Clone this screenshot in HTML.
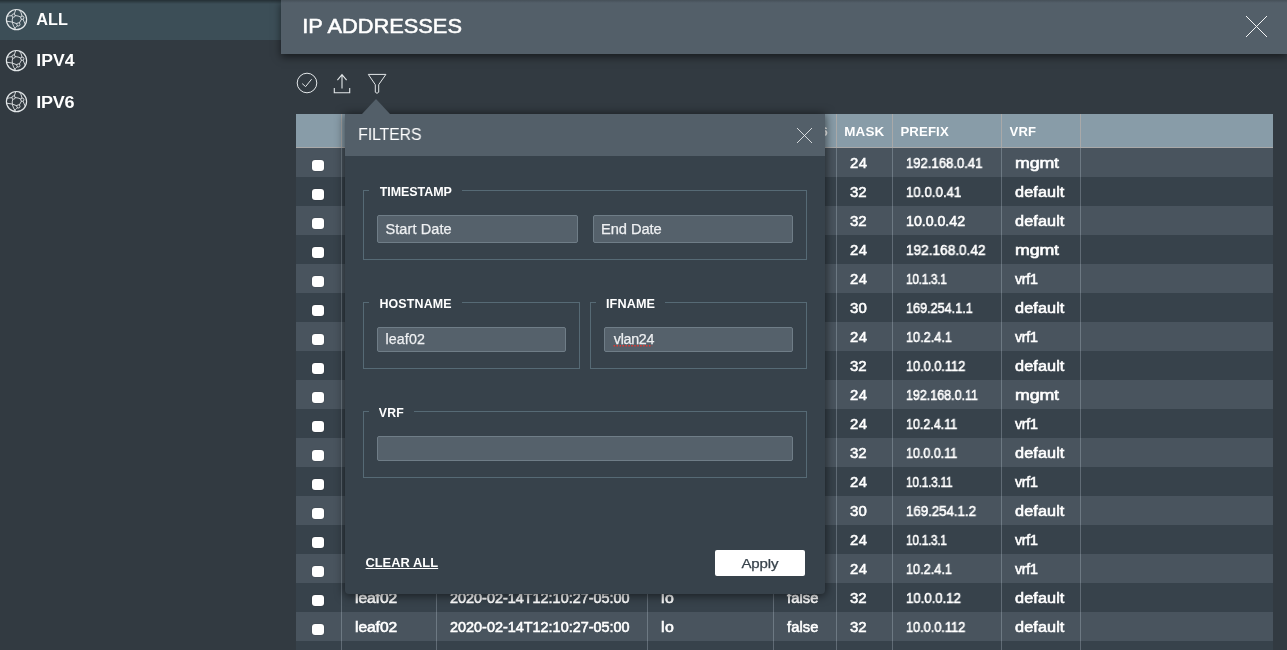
<!DOCTYPE html>
<html lang="en">
<head>
<meta charset="utf-8">
<title>IP Addresses</title>
<style>
*{box-sizing:border-box;margin:0;padding:0}
html,body{width:1287px;height:650px;overflow:hidden}
body{background:#323a41;font-family:"Liberation Sans",sans-serif;color:#fff;position:relative}
.abs{position:absolute}
i{font-style:normal}
.t{position:absolute;white-space:nowrap;display:block;transform-origin:0 0;will-change:transform}
.c u{text-decoration:none;display:inline-block;transform:scaleX(.7);margin:0 -1.05px}
.c i{display:inline-block;transform-origin:0 50%;will-change:transform}
/* sidebar */
.sel{position:absolute;left:0;top:0;width:281px;height:40px;background:#3c4e57}
.nav{font-size:16px;font-weight:700;line-height:20px}
.globe{position:absolute;left:5px;width:23px;height:23px}
/* header */
.hdr{position:absolute;left:281px;top:0;width:1006px;height:54px;background:#535f69;box-shadow:0 3px 8px 0 rgba(0,0,0,.55)}
.title{font-size:21px;font-weight:400;line-height:28px;-webkit-text-stroke:.55px #fff}
.topshade{position:absolute;left:0;top:0;width:281px;height:4px;background:linear-gradient(rgba(0,0,0,.4),rgba(0,0,0,0))}
.topshade2{position:absolute;left:281px;top:0;width:1006px;height:3px;background:linear-gradient(rgba(0,0,0,.16),rgba(0,0,0,0))}
/* table */
.th{position:absolute;left:296px;top:114px;width:977px;height:34px;background:#889ca8;border-bottom:1px solid #a9a9a9}
.th b{position:absolute;top:0;height:33px;border-left:1px solid #a9a9a9}
.th .t{top:9px;line-height:16px;font-size:13px;font-weight:700}
.r{position:absolute;left:296px;width:977px;height:29px}
.o{background:#49545e}.e{background:#37424b}
.c{position:absolute;top:0;height:29px;line-height:28px;padding-top:1px;font-size:14px;font-weight:400;-webkit-text-stroke:.55px #fff;white-space:nowrap;border-left:1px solid rgba(220,232,242,.25);padding-left:13px;overflow:hidden}
.c1{left:45px;width:95px}.c2{left:140px;width:211px}.c3{left:351px;width:126px}.c4{left:477px;width:63px}
.c5{left:540px;width:56px}.c6{left:596px;width:109px;padding-left:13.4px}.c7{left:705px;width:79px}
.r:after{content:"";position:absolute;left:784px;top:0;bottom:0;border-left:1px solid rgba(220,232,242,.25)}
.cb{position:absolute;left:16.3px;top:11.6px;width:11.4px;height:11.4px;background:#fff;border-radius:3px;box-shadow:0 0 1px rgba(0,0,0,.5)}
/* filter */
.fp{position:absolute;left:345px;top:114px;width:480px;height:479.5px;background:#37424b;border-radius:0 0 4px 4px;box-shadow:0 1px 10px 1px rgba(0,0,0,.55)}
.fph{position:absolute;left:0;top:0;width:480px;height:42px;background:#535f69}
.ftitle{font-size:16px;font-weight:400;line-height:24px}
.arrow{position:absolute;left:17px;top:-15px;width:0;height:0;border-left:14px solid transparent;border-right:14px solid transparent;border-bottom:15px solid #535f69}
.fs{position:absolute;border:1px solid #566a75}
.lg{position:absolute;top:-9px;left:5px;height:17px;background:#37424b}
.lg .t{left:10px;top:0;font-size:12px;font-weight:700;line-height:16px}
.in{position:absolute;background:#55616b;border:1px solid #6f7d87;border-radius:2px}
.in .t{left:8px;top:5px;font-size:14px;line-height:16px;color:#eef0f2;-webkit-text-stroke:.25px #eef0f2}
.clear{font-size:12.5px;font-weight:700;text-decoration:underline;line-height:16px}
.apply{position:absolute;left:370px;top:436px;width:90px;height:26px;background:#fff;border-radius:2px}
.apply .t{left:26px;top:5px;color:#37424b;font-size:13.5px;line-height:16px;-webkit-text-stroke:.25px #37424b}
</style>
</head>
<body>
<div class="sel"></div>
<svg class="globe" style="top:8px" viewBox="0 0 23 23" fill="none" stroke="#e3e7e9" stroke-width=".9">
<circle cx="11.5" cy="11.6" r="10.1" stroke-width="1.2"/>
<path d="M10.9 1.7 Q9.9 3.8 9.2 6.2 M1.8 8.4 Q4.5 7.7 7.2 7.7 M7.9 9 Q5.6 14.5 10.6 21.4 M9.9 7.5 Q13.2 7.7 16.1 9.2 M14.2 1.8 Q16.6 4.6 17.1 8.3 M18 11.1 Q19.2 14 20.2 16.2 M16.6 11 L14.2 15.2 M12.1 15.9 Q7.6 13.6 1.8 13.2 M12.6 17.6 Q11.4 19 9.6 20.6"/>
<circle cx="8.55" cy="7.55" r="1.6"/><circle cx="17.3" cy="9.7" r="1.6"/><circle cx="13.4" cy="16.4" r="1.6"/>
</svg>
<svg class="globe" style="top:48.5px" viewBox="0 0 23 23" fill="none" stroke="#e3e7e9" stroke-width=".9">
<circle cx="11.5" cy="11.6" r="10.1" stroke-width="1.2"/>
<path d="M10.9 1.7 Q9.9 3.8 9.2 6.2 M1.8 8.4 Q4.5 7.7 7.2 7.7 M7.9 9 Q5.6 14.5 10.6 21.4 M9.9 7.5 Q13.2 7.7 16.1 9.2 M14.2 1.8 Q16.6 4.6 17.1 8.3 M18 11.1 Q19.2 14 20.2 16.2 M16.6 11 L14.2 15.2 M12.1 15.9 Q7.6 13.6 1.8 13.2 M12.6 17.6 Q11.4 19 9.6 20.6"/>
<circle cx="8.55" cy="7.55" r="1.6"/><circle cx="17.3" cy="9.7" r="1.6"/><circle cx="13.4" cy="16.4" r="1.6"/>
</svg>
<svg class="globe" style="top:89.7px" viewBox="0 0 23 23" fill="none" stroke="#e3e7e9" stroke-width=".9">
<circle cx="11.5" cy="11.6" r="10.1" stroke-width="1.2"/>
<path d="M10.9 1.7 Q9.9 3.8 9.2 6.2 M1.8 8.4 Q4.5 7.7 7.2 7.7 M7.9 9 Q5.6 14.5 10.6 21.4 M9.9 7.5 Q13.2 7.7 16.1 9.2 M14.2 1.8 Q16.6 4.6 17.1 8.3 M18 11.1 Q19.2 14 20.2 16.2 M16.6 11 L14.2 15.2 M12.1 15.9 Q7.6 13.6 1.8 13.2 M12.6 17.6 Q11.4 19 9.6 20.6"/>
<circle cx="8.55" cy="7.55" r="1.6"/><circle cx="17.3" cy="9.7" r="1.6"/><circle cx="13.4" cy="16.4" r="1.6"/>
</svg>
<span class="t nav" id="t_all" style="left:37px;top:9px;letter-spacing:0.09px;transform:translate(-0.80px,1.00px) scaleX(1.013)">ALL</span>
<span class="t nav" id="t_ipv4" style="left:37px;top:50px;letter-spacing:0.05px;transform:translate(-0.80px,1.00px) scaleX(1.100)">IPV4</span>
<span class="t nav" id="t_ipv6" style="left:37px;top:91px;letter-spacing:-0.19px;transform:translate(-0.80px,2.00px) scaleX(1.124)">IPV6</span>

<!-- toolbar icons -->
<svg class="abs" style="left:295px;top:71px" width="24" height="24" viewBox="0 0 24 24" fill="none" stroke="#e3e7e9" stroke-width="1"><circle cx="12" cy="12" r="9.8"/><path d="M7.2 12.6 L10.6 15.6 L16.6 8.2"/></svg>
<svg class="abs" style="left:330px;top:71px" width="24" height="24" viewBox="0 0 24 24" fill="none" stroke="#e3e7e9" stroke-width="1.1"><path d="M12 3.6 V17.4 M7.4 9.1 L12 3.6 L16.6 9.1 M4.3 17 V21.7 H19.7 V17"/></svg>
<svg class="abs" style="left:365px;top:71px" width="24" height="24" viewBox="0 0 24 24" fill="none" stroke="#e3e7e9" stroke-width="1" stroke-linejoin="round"><path d="M3.3 3.4 H20.9 L13.7 13.7 V21.2 Q12 23.4 10.3 21.2 V13.7 Z"/></svg>

<!-- table -->
<div class="th">
<b style="left:45px"></b><b style="left:140px"></b><b style="left:351px"></b><b style="left:477px"></b><b style="left:540px"></b><b style="left:596px"></b><b style="left:705px"></b><b style="left:784px"></b>
<span class="t" style="left:54px">HOSTNAME</span><span class="t" style="left:149px">TIMESTAMP</span><span class="t" style="left:360px">IFNAME</span><span class="t" id="h_isip" style="left:486px;letter-spacing:1.03px;transform:translate(0.00px,1.00px) scaleX(1.000)">ISIPV6</span>
<span class="t" id="h_mask" style="left:549px;letter-spacing:0.17px;transform:translate(-0.80px,1.00px) scaleX(1.032)">MASK</span>
<span class="t" id="h_prefix" style="left:605px;letter-spacing:0.14px;transform:translate(-0.60px,1.00px) scaleX(1.013)">PREFIX</span>
<span class="t" id="h_vrf" style="left:714px;letter-spacing:0.13px;transform:translate(-0.40px,1.00px) scaleX(1.004)">VRF</span>
</div>
<div class="r o" style="top:148px"><span class="cb"></span><span class="c c1"><i style="letter-spacing:0.00px;transform:scaleX(1.000)">leaf01</i></span><span class="c c2"><i style="letter-spacing:-0.00px;transform:scaleX(1.030)">2020-02-14T12:10:27-05:00</i></span><span class="c c3"><i style="letter-spacing:0.00px;transform:scaleX(1.000)">eth0</i></span><span class="c c4"><i style="letter-spacing:0.11px;transform:scaleX(1.050)">false</i></span><span class="c c5"><i style="letter-spacing:0.60px;transform:scaleX(1.056)">24</i></span><span class="c c6"><i style="letter-spacing:0.02px;transform:scaleX(0.932)">192.168.0.41</i></span><span class="c c7"><i style="letter-spacing:-0.12px;transform:scaleX(1.271)">mgmt</i></span></div>
<div class="r e" style="top:177px"><span class="cb"></span><span class="c c1"><i style="letter-spacing:0.00px;transform:scaleX(1.000)">leaf01</i></span><span class="c c2"><i style="letter-spacing:-0.00px;transform:scaleX(1.030)">2020-02-14T12:10:27-05:00</i></span><span class="c c3"><i style="letter-spacing:0.40px;transform:scaleX(1.136)">lo</i></span><span class="c c4"><i style="letter-spacing:0.11px;transform:scaleX(1.050)">false</i></span><span class="c c5"><i style="letter-spacing:0.00px;transform:scaleX(1.067)">32</i></span><span class="c c6"><i style="letter-spacing:0.00px;transform:scaleX(0.948)">10.0.0.41</i></span><span class="c c7"><i style="letter-spacing:0.09px;transform:scaleX(1.160)">default</i></span></div>
<div class="r o" style="top:206px"><span class="cb"></span><span class="c c1"><i style="letter-spacing:0.00px;transform:scaleX(1.000)">leaf01</i></span><span class="c c2"><i style="letter-spacing:-0.00px;transform:scaleX(1.030)">2020-02-14T12:10:27-05:00</i></span><span class="c c3"><i style="letter-spacing:0.40px;transform:scaleX(1.136)">lo</i></span><span class="c c4"><i style="letter-spacing:0.11px;transform:scaleX(1.050)">false</i></span><span class="c c5"><i style="letter-spacing:0.00px;transform:scaleX(1.067)">32</i></span><span class="c c6"><i style="letter-spacing:-0.03px;transform:scaleX(1.016)">10.0.0.42</i></span><span class="c c7"><i style="letter-spacing:0.09px;transform:scaleX(1.160)">default</i></span></div>
<div class="r e" style="top:235px"><span class="cb"></span><span class="c c1"><i style="letter-spacing:-0.08px;transform:scaleX(1.118)">leaf02</i></span><span class="c c2"><i style="letter-spacing:-0.00px;transform:scaleX(1.030)">2020-02-14T12:10:27-05:00</i></span><span class="c c3"><i style="letter-spacing:0.00px;transform:scaleX(1.000)">eth0</i></span><span class="c c4"><i style="letter-spacing:0.11px;transform:scaleX(1.050)">false</i></span><span class="c c5"><i style="letter-spacing:0.60px;transform:scaleX(1.056)">24</i></span><span class="c c6"><i style="letter-spacing:0.01px;transform:scaleX(0.972)">192.168.0.42</i></span><span class="c c7"><i style="letter-spacing:-0.12px;transform:scaleX(1.271)">mgmt</i></span></div>
<div class="r o" style="top:264px"><span class="cb"></span><span class="c c1"><i style="letter-spacing:-0.08px;transform:scaleX(1.118)">leaf02</i></span><span class="c c2"><i style="letter-spacing:-0.00px;transform:scaleX(1.030)">2020-02-14T12:10:27-05:00</i></span><span class="c c3"><i style="letter-spacing:0.00px;transform:scaleX(1.000)">vlan13</i></span><span class="c c4"><i style="letter-spacing:0.11px;transform:scaleX(1.050)">false</i></span><span class="c c5"><i style="letter-spacing:0.60px;transform:scaleX(1.056)">24</i></span><span class="c c6"><i style="letter-spacing:-0.36px;transform:scaleX(0.850)">10.1.3.1</i></span><span class="c c7"><i style="letter-spacing:-0.24px;transform:scaleX(1.017)">vrf1</i></span></div>
<div class="r e" style="top:293px"><span class="cb"></span><span class="c c1"><i style="letter-spacing:-0.08px;transform:scaleX(1.118)">leaf02</i></span><span class="c c2"><i style="letter-spacing:-0.00px;transform:scaleX(1.030)">2020-02-14T12:10:27-05:00</i></span><span class="c c3"><i style="letter-spacing:0.00px;transform:scaleX(1.000)">peerlink.4094</i></span><span class="c c4"><i style="letter-spacing:0.11px;transform:scaleX(1.050)">false</i></span><span class="c c5"><i style="letter-spacing:0.25px;transform:scaleX(1.069)">30</i></span><span class="c c6"><i style="letter-spacing:-0.04px;transform:scaleX(0.908)">169.254.1.1</i></span><span class="c c7"><i style="letter-spacing:0.09px;transform:scaleX(1.160)">default</i></span></div>
<div class="r o" style="top:322px"><span class="cb"></span><span class="c c1"><i style="letter-spacing:-0.08px;transform:scaleX(1.118)">leaf02</i></span><span class="c c2"><i style="letter-spacing:-0.00px;transform:scaleX(1.030)">2020-02-14T12:10:27-05:00</i></span><span class="c c3"><i style="letter-spacing:0.00px;transform:scaleX(1.000)">vlan24</i></span><span class="c c4"><i style="letter-spacing:0.11px;transform:scaleX(1.050)">false</i></span><span class="c c5"><i style="letter-spacing:0.60px;transform:scaleX(1.056)">24</i></span><span class="c c6"><i style="letter-spacing:0.04px;transform:scaleX(0.904)">10.2.4.1</i></span><span class="c c7"><i style="letter-spacing:-0.24px;transform:scaleX(1.017)">vrf1</i></span></div>
<div class="r e" style="top:351px"><span class="cb"></span><span class="c c1"><i style="letter-spacing:-0.08px;transform:scaleX(1.118)">leaf02</i></span><span class="c c2"><i style="letter-spacing:-0.00px;transform:scaleX(1.030)">2020-02-14T12:10:27-05:00</i></span><span class="c c3"><i style="letter-spacing:0.40px;transform:scaleX(1.136)">lo</i></span><span class="c c4"><i style="letter-spacing:0.11px;transform:scaleX(1.050)">false</i></span><span class="c c5"><i style="letter-spacing:0.00px;transform:scaleX(1.067)">32</i></span><span class="c c6"><i style="letter-spacing:-0.05px;transform:scaleX(0.915)">10.0.0.112</i></span><span class="c c7"><i style="letter-spacing:0.09px;transform:scaleX(1.160)">default</i></span></div>
<div class="r o" style="top:380px"><span class="cb"></span><span class="c c1"><i style="letter-spacing:0.00px;transform:scaleX(1.000)">leaf01</i></span><span class="c c2"><i style="letter-spacing:-0.00px;transform:scaleX(1.030)">2020-02-14T12:10:27-05:00</i></span><span class="c c3"><i style="letter-spacing:0.00px;transform:scaleX(1.000)">eth0</i></span><span class="c c4"><i style="letter-spacing:0.11px;transform:scaleX(1.050)">false</i></span><span class="c c5"><i style="letter-spacing:0.60px;transform:scaleX(1.056)">24</i></span><span class="c c6"><i style="letter-spacing:-0.01px;transform:scaleX(0.893)">192.168.0.11</i></span><span class="c c7"><i style="letter-spacing:-0.12px;transform:scaleX(1.271)">mgmt</i></span></div>
<div class="r e" style="top:409px"><span class="cb"></span><span class="c c1"><i style="letter-spacing:0.00px;transform:scaleX(1.000)">leaf01</i></span><span class="c c2"><i style="letter-spacing:-0.00px;transform:scaleX(1.030)">2020-02-14T12:10:27-05:00</i></span><span class="c c3"><i style="letter-spacing:0.00px;transform:scaleX(1.000)">vlan24</i></span><span class="c c4"><i style="letter-spacing:0.11px;transform:scaleX(1.050)">false</i></span><span class="c c5"><i style="letter-spacing:0.60px;transform:scaleX(1.056)">24</i></span><span class="c c6"><i style="letter-spacing:-0.05px;transform:scaleX(0.898)">10.2.4.11</i></span><span class="c c7"><i style="letter-spacing:-0.24px;transform:scaleX(1.017)">vrf1</i></span></div>
<div class="r o" style="top:438px"><span class="cb"></span><span class="c c1"><i style="letter-spacing:0.00px;transform:scaleX(1.000)">leaf01</i></span><span class="c c2"><i style="letter-spacing:-0.00px;transform:scaleX(1.030)">2020-02-14T12:10:27-05:00</i></span><span class="c c3"><i style="letter-spacing:0.40px;transform:scaleX(1.136)">lo</i></span><span class="c c4"><i style="letter-spacing:0.11px;transform:scaleX(1.050)">false</i></span><span class="c c5"><i style="letter-spacing:0.00px;transform:scaleX(1.067)">32</i></span><span class="c c6"><i style="letter-spacing:-0.05px;transform:scaleX(0.898)">10.0.0.11</i></span><span class="c c7"><i style="letter-spacing:0.09px;transform:scaleX(1.160)">default</i></span></div>
<div class="r e" style="top:467px"><span class="cb"></span><span class="c c1"><i style="letter-spacing:0.00px;transform:scaleX(1.000)">leaf01</i></span><span class="c c2"><i style="letter-spacing:-0.00px;transform:scaleX(1.030)">2020-02-14T12:10:27-05:00</i></span><span class="c c3"><i style="letter-spacing:0.00px;transform:scaleX(1.000)">vlan13</i></span><span class="c c4"><i style="letter-spacing:0.11px;transform:scaleX(1.050)">false</i></span><span class="c c5"><i style="letter-spacing:0.60px;transform:scaleX(1.056)">24</i></span><span class="c c6"><i style="letter-spacing:-0.33px;transform:scaleX(0.850)">10.1.3.11</i></span><span class="c c7"><i style="letter-spacing:-0.24px;transform:scaleX(1.017)">vrf1</i></span></div>
<div class="r o" style="top:496px"><span class="cb"></span><span class="c c1"><i style="letter-spacing:0.00px;transform:scaleX(1.000)">leaf01</i></span><span class="c c2"><i style="letter-spacing:-0.00px;transform:scaleX(1.030)">2020-02-14T12:10:27-05:00</i></span><span class="c c3"><i style="letter-spacing:0.00px;transform:scaleX(1.000)">peerlink.4094</i></span><span class="c c4"><i style="letter-spacing:0.11px;transform:scaleX(1.050)">false</i></span><span class="c c5"><i style="letter-spacing:0.25px;transform:scaleX(1.069)">30</i></span><span class="c c6"><i style="letter-spacing:-0.05px;transform:scaleX(0.953)">169.254.1.2</i></span><span class="c c7"><i style="letter-spacing:0.09px;transform:scaleX(1.160)">default</i></span></div>
<div class="r e" style="top:525px"><span class="cb"></span><span class="c c1"><i style="letter-spacing:0.00px;transform:scaleX(1.000)">leaf01</i></span><span class="c c2"><i style="letter-spacing:-0.00px;transform:scaleX(1.030)">2020-02-14T12:10:27-05:00</i></span><span class="c c3"><i style="letter-spacing:0.00px;transform:scaleX(1.000)">vlan13-v0</i></span><span class="c c4"><i style="letter-spacing:0.11px;transform:scaleX(1.050)">false</i></span><span class="c c5"><i style="letter-spacing:0.60px;transform:scaleX(1.056)">24</i></span><span class="c c6"><i style="letter-spacing:-0.36px;transform:scaleX(0.850)">10.1.3.1</i></span><span class="c c7"><i style="letter-spacing:-0.24px;transform:scaleX(1.017)">vrf1</i></span></div>
<div class="r o" style="top:554px"><span class="cb"></span><span class="c c1"><i style="letter-spacing:0.00px;transform:scaleX(1.000)">leaf01</i></span><span class="c c2"><i style="letter-spacing:-0.00px;transform:scaleX(1.030)">2020-02-14T12:10:27-05:00</i></span><span class="c c3"><i style="letter-spacing:0.00px;transform:scaleX(1.000)">vlan24-v0</i></span><span class="c c4"><i style="letter-spacing:0.11px;transform:scaleX(1.050)">false</i></span><span class="c c5"><i style="letter-spacing:0.60px;transform:scaleX(1.056)">24</i></span><span class="c c6"><i style="letter-spacing:0.04px;transform:scaleX(0.904)">10.2.4.1</i></span><span class="c c7"><i style="letter-spacing:-0.24px;transform:scaleX(1.017)">vrf1</i></span></div>
<div class="r e" style="top:583px"><span class="cb"></span><span class="c c1"><i style="letter-spacing:-0.08px;transform:scaleX(1.118)">leaf02</i></span><span class="c c2"><i style="letter-spacing:-0.00px;transform:scaleX(1.030)">2020-02-14T12:10:27-05:00</i></span><span class="c c3"><i style="letter-spacing:0.40px;transform:scaleX(1.136)">lo</i></span><span class="c c4"><i style="letter-spacing:0.11px;transform:scaleX(1.050)">false</i></span><span class="c c5"><i style="letter-spacing:0.00px;transform:scaleX(1.067)">32</i></span><span class="c c6"><i style="letter-spacing:-0.08px;transform:scaleX(0.950)">10.0.0.12</i></span><span class="c c7"><i style="letter-spacing:0.09px;transform:scaleX(1.160)">default</i></span></div>
<div class="r o" style="top:612px"><span class="cb"></span><span class="c c1"><i style="letter-spacing:-0.08px;transform:scaleX(1.118)">leaf02</i></span><span class="c c2"><i style="letter-spacing:-0.00px;transform:scaleX(1.030)">2020-02-14T12:10:27-05:00</i></span><span class="c c3"><i style="letter-spacing:0.40px;transform:scaleX(1.136)">lo</i></span><span class="c c4"><i style="letter-spacing:0.11px;transform:scaleX(1.050)">false</i></span><span class="c c5"><i style="letter-spacing:0.00px;transform:scaleX(1.067)">32</i></span><span class="c c6"><i style="letter-spacing:-0.05px;transform:scaleX(0.915)">10.0.0.112</i></span><span class="c c7"><i style="letter-spacing:0.09px;transform:scaleX(1.160)">default</i></span></div>
<div class="r e" style="top:641px"><span class="cb"></span><span class="c c1"><i style="letter-spacing:0.00px;transform:scaleX(1.000)"></i></span><span class="c c2"><i style="letter-spacing:0.00px;transform:scaleX(1.000)"></i></span><span class="c c3"><i style="letter-spacing:0.00px;transform:scaleX(1.000)"></i></span><span class="c c4"><i style="letter-spacing:0.00px;transform:scaleX(1.000)"></i></span><span class="c c5"><i style="letter-spacing:0.00px;transform:scaleX(1.000)"></i></span><span class="c c6"><i style="letter-spacing:0.00px;transform:scaleX(1.000)"></i></span><span class="c c7"><i style="letter-spacing:0.00px;transform:scaleX(1.000)"></i></span></div>

<div class="hdr">
<span class="t title" id="t_title" style="left:22px;top:13px;letter-spacing:0.01px;transform:translate(-0.70px,-0.60px) scaleX(1.038)">IP ADDRESSES</span>
<svg class="abs" style="left:963px;top:14px" width="25" height="25" viewBox="0 0 25 25" stroke="#f4f5f6" stroke-width="1"><path d="M2 2 L23 23 M23 2 L2 23"/></svg>
</div>
<div class="topshade"></div><div class="topshade2"></div>

<!-- filter panel -->
<div class="fp">
<div class="arrow"></div>
<div class="fph"><span class="t ftitle" id="t_filters" style="left:13px;top:9px;letter-spacing:-0.12px;transform:translate(0.20px,0.00px) scaleX(0.990)">FILTERS</span>
<svg class="abs" style="left:450px;top:12px" width="19" height="19" viewBox="0 0 19 19" stroke="#eceef0" stroke-width=".85"><path d="M2 2 L17 17 M17 2 L2 17"/></svg>
</div>
<div class="fs" style="left:18px;top:76px;width:444px;height:70px"><div class="lg" style="width:93px"><span class="t" id="t_lts" style="letter-spacing:-0.06px;transform:translate(0.80px,2.00px) scaleX(1.040)">TIMESTAMP</span></div>
<div class="in" style="left:13px;top:24px;width:201px;height:28px"><span class="t" id="t_start" style="letter-spacing:0.09px;transform:translate(-0.60px,0.00px) scaleX(1.037)">Start Date</span></div>
<div class="in" style="left:229px;top:24px;width:200px;height:28px"><span class="t" id="t_end" style="letter-spacing:-0.07px;transform:translate(-1.00px,0.00px) scaleX(1.049)">End Date</span></div>
</div>
<div class="fs" style="left:18px;top:188px;width:217px;height:67px"><div class="lg" style="width:93px"><span class="t" id="t_lhost" style="letter-spacing:0.15px;transform:translate(0.40px,2.00px) scaleX(1.035)">HOSTNAME</span></div>
<div class="in" style="left:13px;top:24px;width:189px;height:25px"><span class="t" id="t_leaf" style="letter-spacing:0.14px;transform:translate(-0.60px,-2.00px) scaleX(1.016)">leaf02</span></div>
</div>
<div class="fs" style="left:245px;top:188px;width:217px;height:67px"><div class="lg" style="width:69px"><span class="t" id="t_lif" style="letter-spacing:0.09px;transform:translate(0.00px,2.00px) scaleX(1.054)">IFNAME</span></div>
<div class="in" style="left:13px;top:24px;width:189px;height:25px"><span class="t" id="t_vlan" style="letter-spacing:-0.28px;transform:translate(0.80px,-2.00px) scaleX(1.020)">vlan24</span><svg class="abs" style="left:8px;top:16px" width="42" height="4" viewBox="0 0 42 4"><line x1=".6" y1="1.7" x2="39.2" y2="1.7" stroke="#e2352f" stroke-width="1.5" stroke-dasharray="1.5 1.45"/></svg></div>
</div>
<div class="fs" style="left:18px;top:297px;width:444px;height:67px"><div class="lg" style="width:45px"><span class="t" id="t_lvrf" style="letter-spacing:0.22px;transform:translate(-0.20px,2.00px) scaleX(1.021)">VRF</span></div>
<div class="in" style="left:13px;top:24px;width:416px;height:25px"></div>
</div>
<span class="t clear" id="t_clear" style="left:20px;top:441px;letter-spacing:0.03px;transform:translate(0.40px,0.00px) scaleX(1.030)">CLEAR ALL</span>
<div class="apply"><span class="t" id="t_apply" style="letter-spacing:-0.12px;transform:translate(0.40px,1.00px) scaleX(1.112)">Apply</span></div>
</div>
</body>
</html>
